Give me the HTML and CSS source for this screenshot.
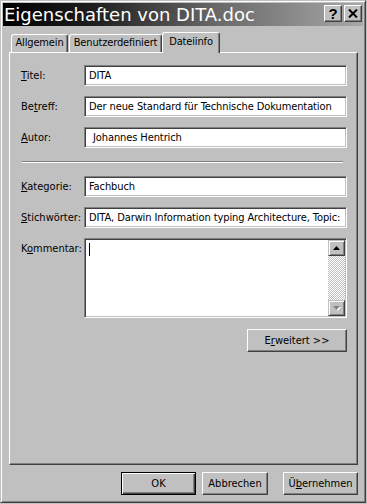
FILE: index.html
```html
<!DOCTYPE html>
<html lang="de">
<head>
<meta charset="utf-8">
<title>Eigenschaften von DITA.doc</title>
<link rel="stylesheet" href="styles.css">
</head>
<body>
<div class="window">
  <div class="titlebar">
    <span class="title">Eigenschaften von DITA.doc</span>
    <div class="caption-buttons">
      <div class="cap-btn help">?</div>
      <div class="cap-btn close">
        <svg width="10" height="9" viewBox="0 0 10 9"><path d="M1 0.5 L9 8.5 M9 0.5 L1 8.5" stroke="#000" stroke-width="2" fill="none"/></svg>
      </div>
    </div>
  </div>
  <div class="dialog-body">
    <div class="tabs">
      <div class="tab tab-general">Allgemein</div>
      <div class="tab tab-custom">Benutzerdefiniert</div>
      <div class="tab tab-info active">Dateiinfo</div>
    </div>
    <div class="panel">
      <div class="group">
        <div class="label"><u>T</u>itel:</div>
        <div class="field">DITA</div>
        <div class="label">Be<u>t</u>reff:</div>
        <div class="field">Der neue Standard für Technische Dokumentation</div>
        <div class="label"><u>A</u>utor:</div>
        <div class="field indent">Johannes Hentrich</div>
      </div>
      <div class="separator"></div>
      <div class="group">
        <div class="label"><u>K</u>ategorie:</div>
        <div class="field">Fachbuch</div>
        <div class="label"><u>S</u>tichwörter:</div>
        <div class="field">DITA, Darwin Information typing Architecture, Topic:</div>
        <div class="label">K<u>o</u>mmentar:</div>
        <div class="field textarea">
          <div class="text-area"><div class="caret"></div></div>
          <div class="scrollbar">
            <div class="scroll-btn">
              <svg width="7" height="4" viewBox="0 0 7 4"><path d="M3.5 0 L7 4 L0 4 Z" fill="#000"/></svg>
            </div>
            <div class="scroll-track"></div>
            <div class="scroll-btn">
              <svg width="8" height="5" viewBox="0 0 8 5"><path d="M1 1 L8 1 L4.5 5 Z" fill="#fff"/><path d="M0 0 L7 0 L3.5 4 Z" fill="#808080"/></svg>
            </div>
          </div>
        </div>
      </div>
      <div class="actions">
        <div class="button wide">E<u>r</u>weitert &gt;&gt;</div>
      </div>
    </div>
    <div class="buttons">
      <div class="button default">OK</div>
      <div class="button cancel">Abbrechen</div>
      <div class="button apply">Ü<u>b</u>ernehmen</div>
    </div>
  </div>
</div>
</body>
</html>
```
FILE: styles.css
```css
html, body {
  margin: 0;
  padding: 0;
}
body {
  background: #c0c0c0;
  font-family: "DejaVu Sans Condensed", "DejaVu Sans", sans-serif;
  font-stretch: condensed;
  font-size: 11px;
  color: #000;
}
u {
  text-decoration: underline;
  text-underline-offset: 1px;
}
.window {
  width: 366px;
  height: 503px;
  box-sizing: border-box;
  border: 1px solid;
  border-color: #c0c0c0 #404040 #404040 #c0c0c0;
  box-shadow: inset 1px 1px #fff, inset -1px -1px #808080;
  padding: 2px;
  display: flex;
  flex-direction: column;
  background: #c0c0c0;
}
.titlebar {
  height: 23px;
  flex: none;
  display: flex;
  align-items: center;
  padding-left: 1px;
  padding-right: 1px;
  background: linear-gradient(to right, #000 0%, #1e1e1e 25%, #6a6a6a 60%, #a8a8a8 100%);
}
.title {
  color: #fff;
  font-family: "DejaVu Sans", sans-serif;
  font-stretch: normal;
  font-size: 18px;
  line-height: 23px;
  white-space: nowrap;
}
.caption-buttons {
  margin-left: auto;
  display: flex;
  gap: 2px;
  align-self: flex-start;
  margin-top: 2px;
}
.cap-btn {
  width: 18px;
  height: 17px;
  box-sizing: border-box;
  border: 1px solid;
  border-color: #fff #404040 #404040 #fff;
  box-shadow: inset -1px -1px #808080;
  background: #c0c0c0;
  display: flex;
  align-items: center;
  justify-content: center;
}
.cap-btn.help {
  font-family: "Liberation Sans", sans-serif;
  font-weight: bold;
  font-size: 15px;
  line-height: 15px;
}
.cap-btn.close svg {
  display: block;
}
.dialog-body {
  flex: 1;
  display: flex;
  flex-direction: column;
  padding: 6px 5px 5px 6px;
}
.tabs {
  height: 20px;
  display: flex;
  align-items: flex-end;
  padding-left: 2px;
}
.tab {
  height: 18px;
  box-sizing: border-box;
  border: 1px solid;
  border-bottom: none;
  border-color: #fff #404040 transparent #fff;
  border-radius: 3px 3px 0 0;
  box-shadow: inset -1px 0 #808080;
  line-height: 16px;
  letter-spacing: -0.15px;
  text-align: center;
  background: #c0c0c0;
  white-space: nowrap;
}
.tab-general {
  width: 57px;
}
.tab-custom {
  width: 93px;
  margin-left: 1px;
}
.tab-info {
  width: 58px;
}
.tab.active {
  height: 21px;
  margin-bottom: -1px;
  line-height: 17px;
  position: relative;
}
.panel {
  height: 413px;
  box-sizing: border-box;
  border: 1px solid;
  border-color: #fff #404040 #404040 #fff;
  box-shadow: inset -1px -1px #808080;
  padding: 12px 10px 0 11px;
  display: flex;
  flex-direction: column;
}
.group {
  display: grid;
  grid-template-columns: 63px 263px;
  row-gap: 10px;
}
.label {
  line-height: 21px;
  white-space: nowrap;
}
.field {
  height: 21px;
  box-sizing: border-box;
  border: 1px solid;
  border-color: #808080 #fff #fff #808080;
  box-shadow: inset 1px 1px #404040, inset -1px -1px #c0c0c0;
  background: #fff;
  padding: 0 3px 0 4px;
  line-height: 19px;
  letter-spacing: -0.1px;
  white-space: nowrap;
  overflow: hidden;
}
.field.indent {
  padding-left: 8px;
}
.field.textarea {
  height: 80px;
  padding: 1px;
  display: flex;
}
.text-area {
  flex: 1;
}
.caret {
  width: 1px;
  height: 13px;
  background: #000;
  margin: 3px 0 0 3px;
}
.scrollbar {
  width: 17px;
  display: flex;
  flex-direction: column;
}
.scroll-btn {
  height: 16px;
  box-sizing: border-box;
  border: 1px solid;
  border-color: #c0c0c0 #404040 #404040 #c0c0c0;
  box-shadow: inset 1px 1px #fff, inset -1px -1px #808080;
  background: #c0c0c0;
  display: flex;
  align-items: center;
  justify-content: center;
}
.scroll-btn svg {
  display: block;
}
.scroll-track {
  flex: 1;
  background: repeating-conic-gradient(#c0c0c0 0 25%, #fff 0 50%) 0 0 / 2px 2px;
}
.separator {
  height: 2px;
  margin: 13px 4px 13px 1px;
  border-top: 1px solid #808080;
  border-bottom: 1px solid #fff;
  box-sizing: border-box;
}
.actions {
  display: flex;
  justify-content: flex-end;
  margin-top: 11px;
}
.button {
  height: 23px;
  box-sizing: border-box;
  border: 1px solid;
  border-color: #fff #404040 #404040 #fff;
  box-shadow: inset -1px -1px #808080;
  background: #c0c0c0;
  display: flex;
  align-items: center;
  justify-content: center;
  white-space: nowrap;
}
.button.wide {
  width: 100px;
}
.buttons {
  margin-top: 7px;
  display: flex;
  justify-content: flex-end;
}
.button.default {
  width: 75px;
  border-color: #000;
  box-shadow: inset 1px 1px #fff, inset -1px -1px #404040, inset -2px -2px #808080;
}
.button.cancel {
  width: 66px;
  margin-left: 6px;
}
.button.apply {
  width: 75px;
  margin-left: 15px;
}
```
